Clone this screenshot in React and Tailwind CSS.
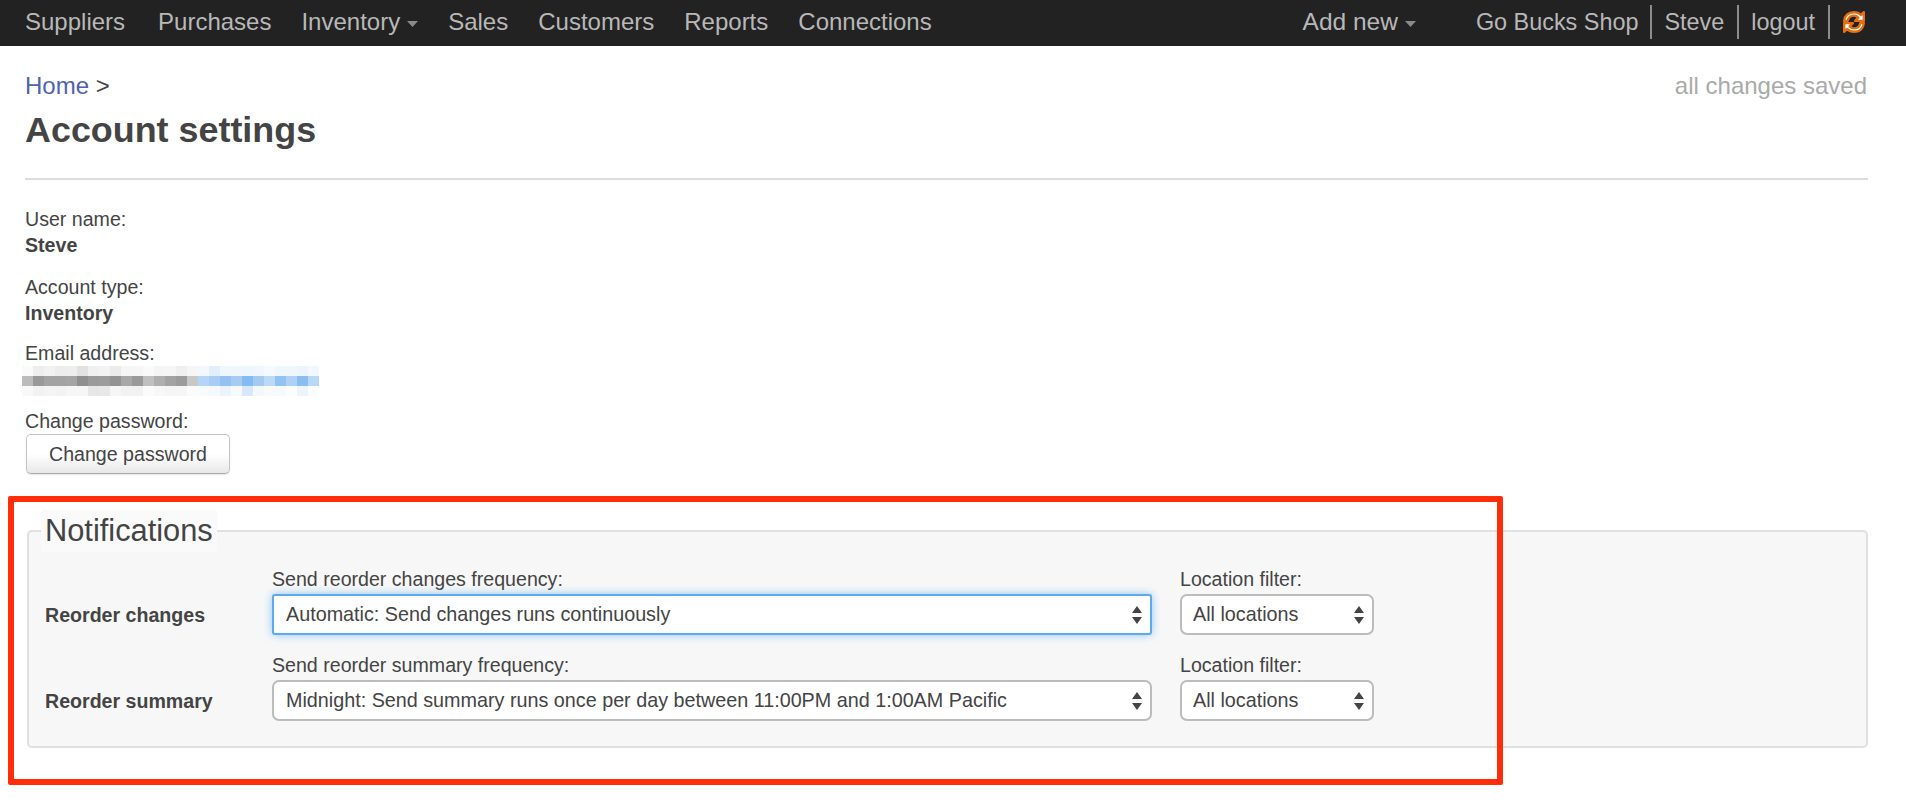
const mosaic = [
  ["#fafafa","#eeeeee","#f2f2f2","#ededed","#eeeeee","#e2e2e2","#f0f0f0","#f3f3f3","#ebebeb","#f6f6f6","#f6f6f6","#fafafa","#f5f5f5","#f6f6f6","#f0f0f0","#f6f6f6","#f2f8fe","#e2eefb","#eff6fd","#f0f6fd","#eef5fd","#f0f6fd","#f6fafe","#eff6fd","#f0f6fd","#ecf4fc","#f2f8fe"],
  ["#bbbbbb","#999999","#a3a3a3","#a3a3a3","#a5a5a5","#8f8f8f","#9a9a9a","#9c9c9c","#939393","#a8a8a8","#9a9a9a","#c0c0c0","#afafaf","#a3a3a3","#9c9c9c","#c8c8c8","#b5d5f8","#a8cdf5","#95c2f2","#a8cbf2","#84bbf0","#a3cbf2","#bcdaf7","#93c3f2","#b0d0f4","#8abdf0","#b8d8f8"],
  ["#f8f8f8","#f2f2f2","#f4f4f4","#f3f3f3","#f6f6f6","#f6f6f6","#e6e6e6","#e8e8e8","#f6f6f6","#f2f2f2","#f2f2f2","#fbfbfb","#f7f7f7","#f5f5f5","#f6f6f6","#fbfbfb","#f8fbfe","#f5f9fe","#ebf4fc","#f6fafe","#d6e8fa","#f2f8fe","#f8fbfe","#f6fafe","#fcfdff","#ecf4fc","#fafcff"],
];

function Caret() {
  return (
    <svg width="11" height="6" viewBox="0 0 11 6" className="ml-[7px] mt-[3px]">
      <path d="M0 0H11L5.5 6Z" fill="#8a8a8a" />
    </svg>
  );
}

function Divider() {
  return <span className="h-[34px] w-[2px] bg-[#8c8c8c]" />;
}

function SyncIcon() {
  const arrow =
    "M3 11 C3.5 6 7 3 12 3 C14.5 3 16.7 4 18.3 5.6 L21 3 V11 H13 L16 8 C15 7 13.6 6.2 12 6.2 C9 6.2 6.7 8.2 6.2 11 Z";
  return (
    <svg width="24" height="24" viewBox="1 1 22 22" className="mt-[-1px]">
      <g fill="#fff" stroke="#e6700f" strokeWidth="2.2" strokeLinejoin="round">
        <path d={arrow} />
        <path d={arrow} transform="rotate(180 12 12)" />
      </g>
    </svg>
  );
}

function Select({ value, focused, wide }) {
  return (
    <div className={`relative ${wide ? "w-[880px]" : "w-[194px]"}`}>
      <select
        defaultValue={value}
        className={`block h-[41px] w-full appearance-none border-2 bg-white pb-[2px] text-[19.75px] text-[#444] outline-none ${
          wide ? "pl-[12px]" : "pl-[11px]"
        } pr-[30px] ${
          focused
            ? "rounded-[3px] border-[#5aabf0] shadow-[0_0_8px_rgba(90,170,240,0.65)]"
            : "rounded-[7px] border-[#bcbcbc]"
        }`}
      >
        <option>{value}</option>
      </select>
      <svg
        width="10"
        height="18"
        viewBox="0 0 10 18"
        className="pointer-events-none absolute right-[10px] top-[12px]"
      >
        <path d="M5 0L10 7H0Z M0 11H10L5 18Z" fill="#444" />
      </svg>
    </div>
  );
}

function Row({ title, label, value, focused }) {
  return (
    <div className="flex items-end">
      <div className="flex h-[41px] w-[227px] items-center font-bold">{title}</div>
      <div>
        <div className="mb-[2px] h-[26px] leading-[26px]">{label}</div>
        <Select value={value} focused={focused} wide />
      </div>
      <div className="ml-[28px]">
        <div className="mb-[2px] h-[26px] leading-[26px]">Location filter:</div>
        <Select value="All locations" />
      </div>
    </div>
  );
}

export default function App() {
  const nav = ["Suppliers", "Purchases", "Inventory", "Sales", "Customers", "Reports", "Connections"];
  return (
    <div className="relative min-h-screen overflow-hidden bg-white font-['Liberation_Sans',Arial,sans-serif] text-[19.6px] leading-[26px] text-[#444]">
      <nav className="flex h-[46px] items-center bg-[#222] pl-[25px] pr-[40px] text-[24px] text-[#b8b8b8]">
        <div className="flex items-center gap-[30px] pb-[2px]">
          {nav.map((n) => (
            <a key={n} className={`flex items-center ${n === "Suppliers" ? "mr-[3px]" : ""}`}>
              {n}
              {n === "Inventory" && <Caret />}
            </a>
          ))}
        </div>
        <div className="ml-auto flex items-center pb-[2px]">
          <a className="flex items-center text-[24.5px]">
            Add new
            <Caret />
          </a>
          <div className="ml-[60px] flex items-center text-[23.4px]">
            <span>Go Bucks Shop</span>
            <span className="ml-[12px] mr-[12px] flex"><Divider /></span>
            <span>Steve</span>
            <span className="ml-[13px] mr-[12px] flex"><Divider /></span>
            <span>logout</span>
            <span className="ml-[13px] mr-[12px] flex"><Divider /></span>
            <SyncIcon />
          </div>
        </div>
      </nav>

      <main className="pl-[25px] pr-[38px]">
        <div className="flex justify-between pt-[25px] text-[24px] leading-[30px]">
          <div>
            <a className="text-[#5060b4]">Home</a> &gt;
          </div>
          <div className="mr-px text-[#aaa]">all changes saved</div>
        </div>
        <h1 className="mt-[7px] text-[35.9px] font-bold leading-[44px]">Account settings</h1>
        <hr className="mt-[26px] border-t-2 border-[#ddd]" />

        <div className="mt-[26px]">
          <div>User name:</div>
          <div className="font-bold">Steve</div>
        </div>
        <div className="mt-[16px]">
          <div>Account type:</div>
          <div className="font-bold">Inventory</div>
        </div>
        <div className="mt-[14px]">
          <div>Email address:</div>
          <svg width="297" height="30" viewBox="0 0 297 30" className="ml-[-3px] block">
            {mosaic.map((row, y) =>
              row.map((c, x) => <rect key={x} x={x * 11} y={y * 10} width="11" height="10" fill={c} />)
            )}
          </svg>
        </div>
        <div className="mt-[12px]">
          <div>Change password:</div>
          <button className="ml-px block h-[40px] w-[204px] rounded-[5px] border border-[#c4c4c4] border-b-[#aaa] bg-gradient-to-b from-white from-50% to-[#e8e8e8] text-center text-[#444] shadow-[0_1px_2px_rgba(0,0,0,0.1)]">
            Change password
          </button>
        </div>

        <fieldset className="ml-[2px] mt-[36px] rounded-[5px] border-2 border-[#e0e0e0] bg-[#f7f7f7] pb-[25px] pl-[16px]">
          <legend className="ml-[-4px] rounded-[3px] bg-[#fafafa] px-[4px] text-[30.8px] leading-[42px]">
            Notifications
          </legend>
          <div className="mt-[14px] flex flex-col gap-[17px]">
            <Row
              title="Reorder changes"
              label="Send reorder changes frequency:"
              value="Automatic: Send changes runs continuously"
              focused
            />
            <Row
              title="Reorder summary"
              label="Send reorder summary frequency:"
              value="Midnight: Send summary runs once per day between 11:00PM and 1:00AM Pacific"
            />
          </div>
        </fieldset>
      </main>

      <div className="pointer-events-none absolute left-[8px] top-[496px] h-[289px] w-[1495px] rounded-[2px] border-[6px] border-[#ff2d0a]" />
    </div>
  );
}
